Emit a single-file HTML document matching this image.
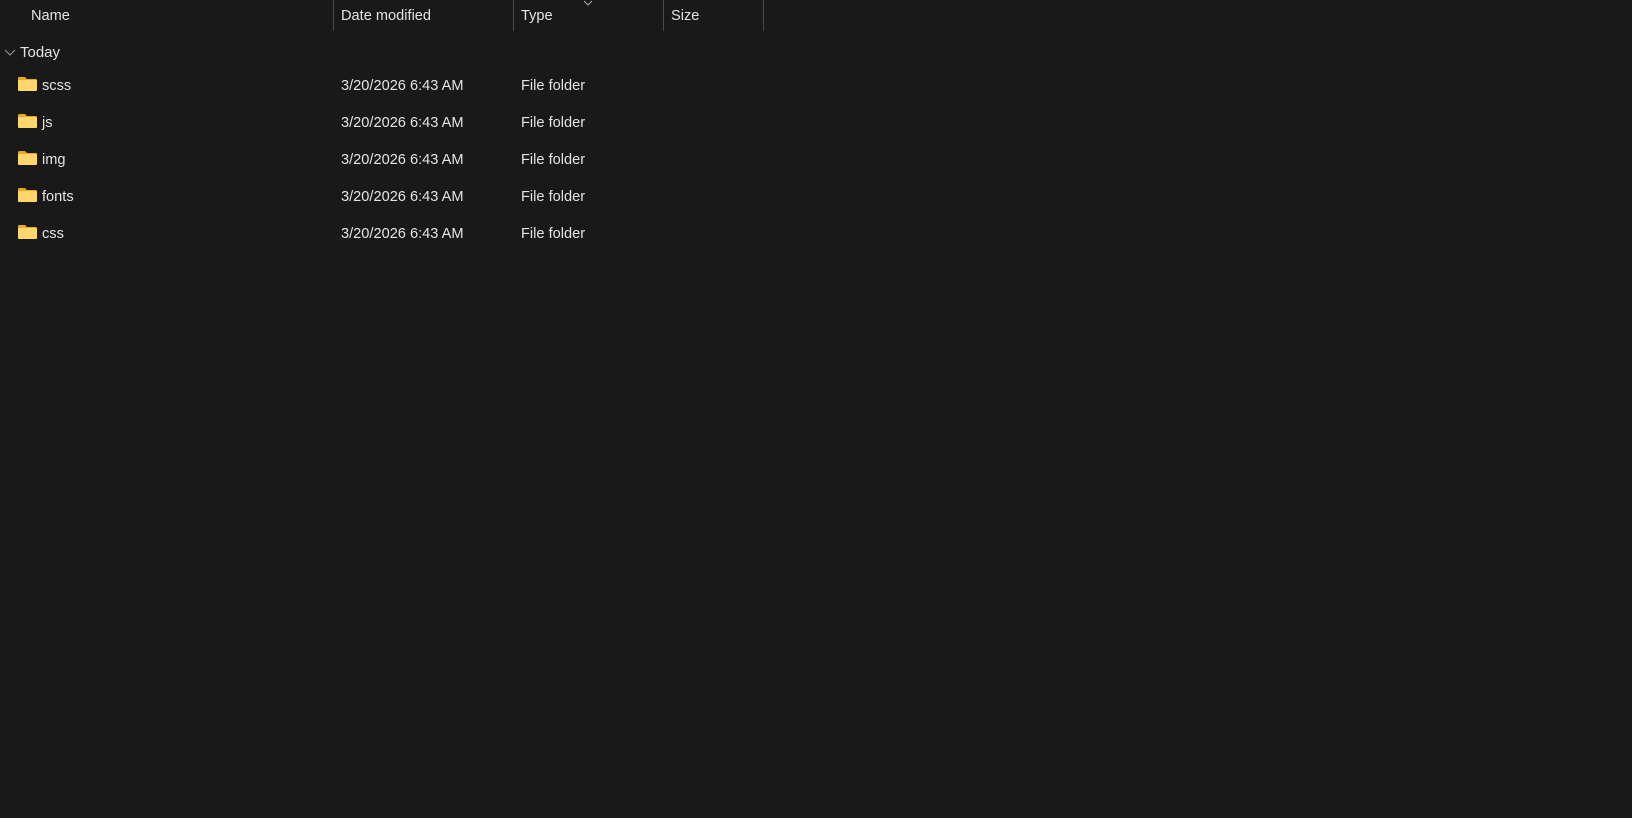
<!DOCTYPE html>
<html><head><style>
body{margin:0;width:1632px;height:818px;background:#191919;font-family:"Liberation Sans",sans-serif;font-size:14.6px;color:#e4e4e4;position:relative;overflow:hidden}
.t{position:absolute;white-space:nowrap;line-height:18px}
.d{position:absolute;top:0;width:1px;height:31px;background:#4a4a4a}
.f{position:absolute;left:18px;width:19px;height:14px}
</style></head><body>
<div class="t" style="left:31px;top:7px">Name</div>
<div class="d" style="left:333px"></div>
<div class="t" style="left:341px;top:7px">Date modified</div>
<div class="d" style="left:513px"></div>
<div class="t" style="left:521px;top:7px">Type</div>
<svg style="position:absolute;left:583px;top:0" width="10" height="6"><path d="M1 1 L5 5 L9 1" stroke="#aaa" fill="none"/></svg>
<div class="d" style="left:663px"></div>
<div class="t" style="left:671px;top:7px">Size</div>
<div class="d" style="left:763px"></div>
<svg style="position:absolute;left:4px;top:49px" width="12" height="8"><path d="M1 1 L6 6 L11 1" stroke="#999" fill="none"/></svg>
<div class="t" style="left:20px;top:44px;font-size:15px">Today</div>

<svg class="f" style="top:77px" viewBox="0 0 19 14"><path d="M0 1.5Q0 0 1.5 0H7L9 2H17.5Q19 2 19 3.5V12.5Q19 14 17.5 14H1.5Q0 14 0 12.5Z" fill="#e8a92a"/><rect x="0" y="3" width="19" height="11" rx="1.2" fill="#ffd66b"/></svg>
<div class="t" style="left:42px;top:77px">scss</div><div class="t" style="left:341px;top:77px">3/20/2026 6:43 AM</div><div class="t" style="left:521px;top:77px">File folder</div>

<svg class="f" style="top:114px" viewBox="0 0 19 14"><path d="M0 1.5Q0 0 1.5 0H7L9 2H17.5Q19 2 19 3.5V12.5Q19 14 17.5 14H1.5Q0 14 0 12.5Z" fill="#e8a92a"/><rect x="0" y="3" width="19" height="11" rx="1.2" fill="#ffd66b"/></svg>
<div class="t" style="left:42px;top:114px">js</div><div class="t" style="left:341px;top:114px">3/20/2026 6:43 AM</div><div class="t" style="left:521px;top:114px">File folder</div>

<svg class="f" style="top:151px" viewBox="0 0 19 14"><path d="M0 1.5Q0 0 1.5 0H7L9 2H17.5Q19 2 19 3.5V12.5Q19 14 17.5 14H1.5Q0 14 0 12.5Z" fill="#e8a92a"/><rect x="0" y="3" width="19" height="11" rx="1.2" fill="#ffd66b"/></svg>
<div class="t" style="left:42px;top:151px">img</div><div class="t" style="left:341px;top:151px">3/20/2026 6:43 AM</div><div class="t" style="left:521px;top:151px">File folder</div>

<svg class="f" style="top:188px" viewBox="0 0 19 14"><path d="M0 1.5Q0 0 1.5 0H7L9 2H17.5Q19 2 19 3.5V12.5Q19 14 17.5 14H1.5Q0 14 0 12.5Z" fill="#e8a92a"/><rect x="0" y="3" width="19" height="11" rx="1.2" fill="#ffd66b"/></svg>
<div class="t" style="left:42px;top:188px">fonts</div><div class="t" style="left:341px;top:188px">3/20/2026 6:43 AM</div><div class="t" style="left:521px;top:188px">File folder</div>

<svg class="f" style="top:225px" viewBox="0 0 19 14"><path d="M0 1.5Q0 0 1.5 0H7L9 2H17.5Q19 2 19 3.5V12.5Q19 14 17.5 14H1.5Q0 14 0 12.5Z" fill="#e8a92a"/><rect x="0" y="3" width="19" height="11" rx="1.2" fill="#ffd66b"/></svg>
<div class="t" style="left:42px;top:225px">css</div><div class="t" style="left:341px;top:225px">3/20/2026 6:43 AM</div><div class="t" style="left:521px;top:225px">File folder</div>
</body></html>
